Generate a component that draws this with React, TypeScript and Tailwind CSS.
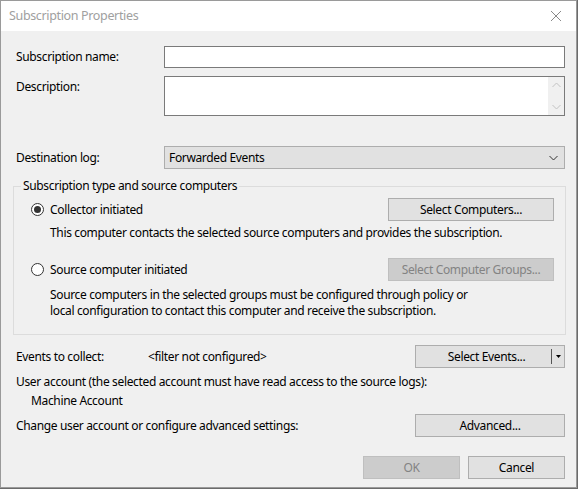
import React from "react";

const font = { fontFamily: '"Noto Sans", "Liberation Sans", sans-serif' };

const Btn = ({
  children,
  disabled,
  className = "",
}: {
  children: React.ReactNode;
  disabled?: boolean;
  className?: string;
}) => (
  <div
    className={`flex h-[23px] items-center justify-center border text-[12px] ${
      disabled
        ? "border-[#bfbfbf] bg-[#cccccc] text-[#838383]"
        : "border-[#adadad] bg-[#e1e1e1] text-black"
    } ${className}`}
  >
    {children}
  </div>
);

const Radio = ({ checked }: { checked?: boolean }) => (
  <div className="flex h-[13px] w-[13px] items-center justify-center rounded-full border border-[#333] bg-white">
    {checked && <div className="h-[7px] w-[7px] rounded-full bg-[#333]" />}
  </div>
);

const Chevron = ({ up, color }: { up?: boolean; color: string }) => (
  <svg width="9" height="6" viewBox="0 0 9 6">
    <path
      d={up ? "M0.5 5 L4.5 1 L8.5 5" : "M0.5 1 L4.5 5 L8.5 1"}
      fill="none"
      stroke={color}
      strokeWidth="1"
    />
  </svg>
);

export default function App() {
  return (
    <div className="h-[489px] w-[578px] overflow-hidden bg-[#6b6b6b]" style={font}>
      <div className="flex h-[488px] w-[577px] flex-col border border-[#9a9a9a] bg-[#f0f0f0] text-[12px] leading-[16px] tracking-[-0.35px] text-black">
        {/* title bar */}
        <div className="flex h-[30px] shrink-0 items-center justify-between bg-white pl-[8px] pr-[14px]">
          <span className="text-[12.5px] tracking-[-0.35px] text-[#a0a0a0]">Subscription Properties</span>
          <svg width="12" height="12" viewBox="0 0 12 12">
            <path d="M1 1 L11 11 M11 1 L1 11" stroke="#8a8a8a" strokeWidth="1" />
          </svg>
        </div>

        <div className="flex flex-col pl-[12px] pr-[11px]">
          {/* name */}
          <div className="mt-[15px] flex items-center pl-[3px]">
            <div className="w-[148px]">Subscription name:</div>
            <div className="h-[22px] flex-1 border border-[#7a7a7a] bg-white" />
          </div>

          {/* description */}
          <div className="mt-[8px] flex pl-[3px]">
            <div className="w-[148px] pt-[3px]">Description:</div>
            <div className="flex h-[40px] flex-1 justify-end border border-[#7a7a7a] bg-white">
              <div className="flex w-[16px] flex-col items-center justify-between bg-[#f0f0f0] py-[5px]">
                <Chevron up color="#c2c2c2" />
                <Chevron color="#c2c2c2" />
              </div>
            </div>
          </div>

          {/* destination log */}
          <div className="mt-[30px] flex items-center pl-[3px]">
            <div className="w-[148px]">Destination log:</div>
            <div className="flex h-[23px] flex-1 items-center justify-between border border-[#adadad] bg-[#e1e1e1] pl-[4px] pr-[6px]">
              <span>Forwarded Events</span>
              <Chevron color="#333" />
            </div>
          </div>

          {/* group box */}
          <fieldset className="mt-[9px] mr-[-1px] border border-[#dcdcdc] pb-[15px] pl-[17px] pr-[11px]">
            <legend className="ml-[-10px] px-[2px]">Subscription type and source computers</legend>
            <div className="mt-[4px] flex items-center justify-between">
              <div className="flex items-center gap-[6px]">
                <Radio checked />
                <span>Collector initiated</span>
              </div>
              <Btn className="w-[166px]">Select Computers...</Btn>
            </div>
            <div className="mt-[4px] pl-[19px]">
              This computer contacts the selected source computers and provides the subscription.
            </div>
            <div className="mt-[17px] flex items-center justify-between">
              <div className="flex items-center gap-[6px]">
                <Radio />
                <span>Source computer initiated</span>
              </div>
              <Btn disabled className="w-[166px]">
                Select Computer Groups...
              </Btn>
            </div>
            <div className="mt-[6px] pl-[19px]">
              <div>Source computers in the selected groups must be configured through policy or</div>
              <div>local configuration to contact this computer and receive the subscription.</div>
            </div>
          </fieldset>

          {/* events */}
          <div className="mt-[10px] flex items-center pl-[3px]">
            <div className="w-[132px]">Events to collect:</div>
            <div className="flex-1">&lt;filter not configured&gt;</div>
            <div className="flex h-[23px] w-[150px] items-center border border-[#adadad] bg-[#e1e1e1]">
              <div className="flex-1 pl-[6px] text-center">Select Events...</div>
              <div className="h-[15px] w-px bg-[#555]" />
              <div className="flex w-[12px] justify-center">
                <svg width="5" height="3" viewBox="0 0 5 3">
                  <path d="M0 0 L5 0 L2.5 3 Z" fill="#000" />
                </svg>
              </div>
            </div>
          </div>

          <div className="mt-[6px] pl-[3px]">
            User account (the selected account must have read access to the source logs):
          </div>
          <div className="mt-[3px] pl-[18px]">Machine Account</div>

          <div className="mt-[5px] flex items-center justify-between pl-[3px]">
            <div>Change user account or configure advanced settings:</div>
            <Btn className="w-[150px]">Advanced...</Btn>
          </div>

          <div className="mt-[19px] flex justify-end gap-[8px]">
            <Btn disabled className="w-[97px]">
              OK
            </Btn>
            <Btn className="w-[97px]">Cancel</Btn>
          </div>
        </div>
      </div>
    </div>
  );
}
